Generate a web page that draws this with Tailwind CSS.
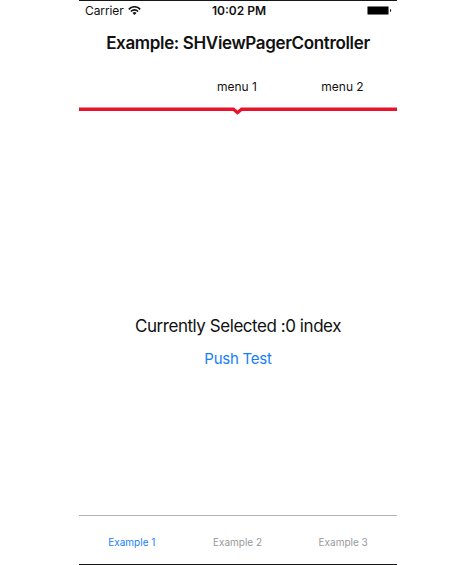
<!DOCTYPE html>
<html lang="en">
<head>
<meta charset="utf-8">
<title>SHViewPagerController</title>
<script src="https://cdn.jsdelivr.net/npm/@tailwindcss/browser@4"></script>
</head>
<body class="bg-white">
<div class="mx-auto flex h-[565px] w-[318px] flex-col border-y border-[#17171a] bg-white font-['Inter',sans-serif] text-[#111]">
  <header class="grid h-5 grid-cols-3 items-center pl-1.5 pr-[5px] text-[12px] leading-5">
    <div class="flex items-center gap-1">
      <span class="tracking-[-0.1px]">Carrier</span>
      <svg class="mb-px h-[9px] w-[13px]" viewBox="0 0 13 9" fill="none" stroke="#111" stroke-width="1.6"><path d="M.8 3.4C4-.1 9-.1 12.200 3.400M2.900 5.500C5 3.300 8 3.300 10.100 5.500"/><path d="M4.500 6.900C5.700 5.700 7.300 5.700 8.500 6.900L6.500 8.900Z" fill="#111" stroke="none"/></svg>
    </div>
    <span class="pl-px text-center font-semibold whitespace-nowrap">10:02 PM</span>
    <svg class="mb-px h-[9px] w-[25px] justify-self-end" viewBox="0 0 25 9"><rect x=".5" y=".5" width="21" height="8" rx=".8" fill="#000" stroke="#777" stroke-width=".7"/><path d="M23 3C24.600 3.200 24.600 5.800 23 6Z" fill="#111"/></svg>
  </header>
  <h1 class="h-[43px] text-center text-[17px] leading-[45px] font-semibold tracking-[-0.35px] whitespace-nowrap">Example: SHViewPagerController</h1>
  <nav class="grid h-[43px] grid-cols-3 text-center text-[12px] leading-[45px]">
    <span></span><span class="pr-[2px]">menu 1</span><span class="pr-[3px]">menu 2</span>
  </nav>
  <svg class="h-[9px] w-[318px] shrink-0" viewBox="0 0 318 9"><path d="M0 .4H155L158.500 3.400L162 .4H318V4H163L158.500 7.700L154 4H0Z" fill="#e8132b"/></svg>
  <main class="flex flex-1 flex-col items-center pt-[198px] whitespace-nowrap">
    <p class="text-[17px] leading-6 tracking-[-0.45px]">Currently Selected :0 index</p>
    <button class="mt-[9px] text-[15px] leading-6 tracking-[-0.25px] text-[#177efb]">Push Test</button>
  </main>
  <footer class="grid h-[49px] grid-cols-3 border-t border-[#b3b3b3] pt-[3px] pr-px text-center text-[10px] leading-[46px] text-[#999]">
    <span class="text-[#177efb]">Example 1</span><span>Example 2</span><span>Example 3</span>
  </footer>
</div>
</body>
</html>
